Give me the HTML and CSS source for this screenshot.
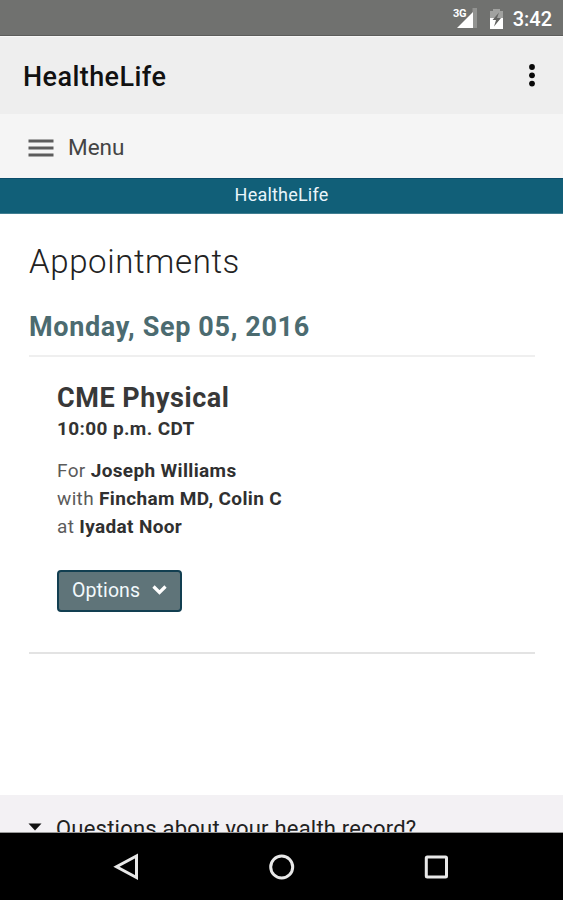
FILE: index.html
```html
<!DOCTYPE html>
<html lang="en">
<head>
<meta charset="utf-8">
<title>HealtheLife</title>
<link rel="stylesheet" href="styles.css">
</head>
<body>
<div class="screen">
  <div class="status">
    <svg class="signal" width="27" height="24" viewBox="0 0 27 24">
      <path d="M19.500 0H24V20H19.500Z" fill="#929391"/>
      <path d="M4 20L20 4V20Z" fill="#fff"/>
      <text x="0" y="9" class="net">3G</text>
    </svg>
    <svg class="battery" width="15" height="22" viewBox="0 0 15 22">
      <path d="M1 3H4V1H11V3H14V11H1Z" fill="#a1a2a0"/>
      <path d="M1 10H14V21H1Z" fill="#fff"/>
      <path d="M10 4.500L3.500 12H7L5 18.500L12 10H8Z" fill="#636462"/>
    </svg>
    <span class="clock">3:42</span>
  </div>
  <header class="appbar">
    <h1 class="app-name">HealtheLife</h1>
    <svg class="more" width="8" height="24" viewBox="0 0 8 24"><g fill="#080808"><circle cx="4" cy="3" r="2.900"/><circle cx="4" cy="11.300" r="2.900"/><circle cx="4" cy="19.600" r="2.900"/></g></svg>
  </header>
  <nav class="menu">
    <svg width="26" height="20" viewBox="0 0 26 20"><path d="M0.500 3H25.500M0.500 10H25.500M0.500 17H25.500" stroke="#5c5c5c" stroke-width="3"/></svg>
    <span class="menu-label">Menu</span>
  </nav>
  <div class="brand"><span>HealtheLife</span></div>
  <main class="content">
    <h2 class="page-title">Appointments</h2>
    <h3 class="date"><span>Monday, Sep 05, 2016</span></h3>
    <section class="visit">
      <h4 class="visit-name"><span>CME Physical</span></h4>
      <p class="time"><span>10:00 p.m. CDT</span></p>
      <div class="details">
        <p>For <b>Joseph Williams</b></p>
        <p>with <b>Fincham MD, Colin C</b></p>
        <p>at <b>Iyadat Noor</b></p>
      </div>
      <button class="options"><span>Options</span><svg width="16" height="12" viewBox="0 0 16 12"><path d="M1.500 2.500L7.500 8.500L13.500 2.500" fill="none" stroke="#fff" stroke-width="3.200"/></svg></button>
    </section>
  </main>
  <footer class="questions">
    <svg width="14" height="8" viewBox="0 0 14 8"><path d="M0.500 0.500H13.500L7 7.500Z" fill="#111"/></svg>
    <span class="question-text">Questions about your health record?</span>
  </footer>
  <div class="system-nav">
    <svg width="28" height="30" viewBox="0 0 28 30"><path d="M23.500 4V25.500L3.500 14.700Z" fill="none" stroke="#e8e8e8" stroke-width="3"/></svg>
    <svg width="28" height="30" viewBox="0 0 28 30"><circle cx="13.700" cy="15" r="11" fill="none" stroke="#e8e8e8" stroke-width="3"/></svg>
    <svg width="28" height="30" viewBox="0 0 28 30"><rect x="3.300" y="5" width="20.200" height="20" rx="1" fill="none" stroke="#e8e8e8" stroke-width="3"/></svg>
  </div>
</div>
</body>
</html>
```
FILE: styles.css
```css
* { box-sizing: border-box; }
body { margin: 0; font-family: Roboto, sans-serif; color: #333; background: #fff; }
h1, h2, h3, h4, p { margin: 0; }
svg { display: block; flex: none; }
.screen { width: 563px; height: 900px; display: flex; flex-direction: column; overflow: hidden; }
.status { height: 36px; flex: none; background: #70716f; border-bottom: 1px solid #5c5d5b; display: flex; align-items: center; justify-content: flex-end; padding: 2px 11px 0 0; color: #fff; }
.signal { margin: 3px 9px 0 0; overflow: visible; }
.net { font: 700 11px Roboto, sans-serif; fill: #fff; letter-spacing: -.3px; }
.battery { margin-right: 9px; }
.clock { font-size: 20px; font-weight: 500; line-height: 34px; }
.appbar { height: 78px; flex: none; background: #eee; border-top: 1px solid #f8f8f8; display: flex; justify-content: space-between; align-items: center; padding: 0 27px 0 23px; }
.app-name { font-size: 27px; font-weight: 500; line-height: 36px; letter-spacing: .42px; color: #111; padding-top: 3px; }
.menu { height: 64px; flex: none; background: #f5f5f5; display: flex; align-items: center; padding: 3px 0 0 28px; gap: 14px; }
.menu-label { font-size: 22.500px; line-height: 30px; margin-top: -2px; color: #444; }
.brand { height: 36px; flex: none; background: #115f78; border-top: 1px solid #0c4d6b; border-bottom: 1px solid #417e91; color: #e9f5fb; text-align: center; font-size: 18px; line-height: 31px; letter-spacing: .2px; }
.content { flex: 1; padding: 28px 28px 0 29px; }
.page-title { font-size: 33px; font-weight: 300; line-height: 40px; letter-spacing: .6px; color: #222; }
.date { margin-top: 25px; height: 50px; border-bottom: 2px solid #efefef; font-size: 27px; font-weight: 700; line-height: 40px; letter-spacing: .65px; color: #4c6b70; }
.visit { height: 297px; border-bottom: 2px solid #e3e3e3; padding: 24px 0 0 28px; }
.visit-name { font-size: 27px; font-weight: 700; line-height: 34px; letter-spacing: .54px; color: #383838; }
.time { font-size: 19px; font-weight: 700; line-height: 28px; letter-spacing: .37px; }
.details { margin-top: 14px; font-size: 19px; line-height: 28px; letter-spacing: .35px; color: #5b5b5b; }
.details b { color: #303030; }
.options { margin-top: 29px; width: 125px; height: 42px; padding: 0 12px 2px 13px; display: flex; align-items: center; justify-content: space-between; background: #5f7479; border: 2px solid #123f51; border-radius: 4px; color: #f2f9fc; font: 400 19.500px Roboto, sans-serif; letter-spacing: .1px; }
.questions { height: 38px; flex: none; background: #f3f1f4; border-bottom: 1px solid #999; padding: 19px 0 0 28px; display: flex; gap: 14px; overflow: hidden; }
.questions svg { margin-top: 9px; }
.question-text { font-size: 22px; line-height: 29px; letter-spacing: .22px; color: #222; white-space: nowrap; }
.system-nav { height: 67px; flex: none; background: #000; display: flex; justify-content: center; align-items: center; gap: 127px; }
```
